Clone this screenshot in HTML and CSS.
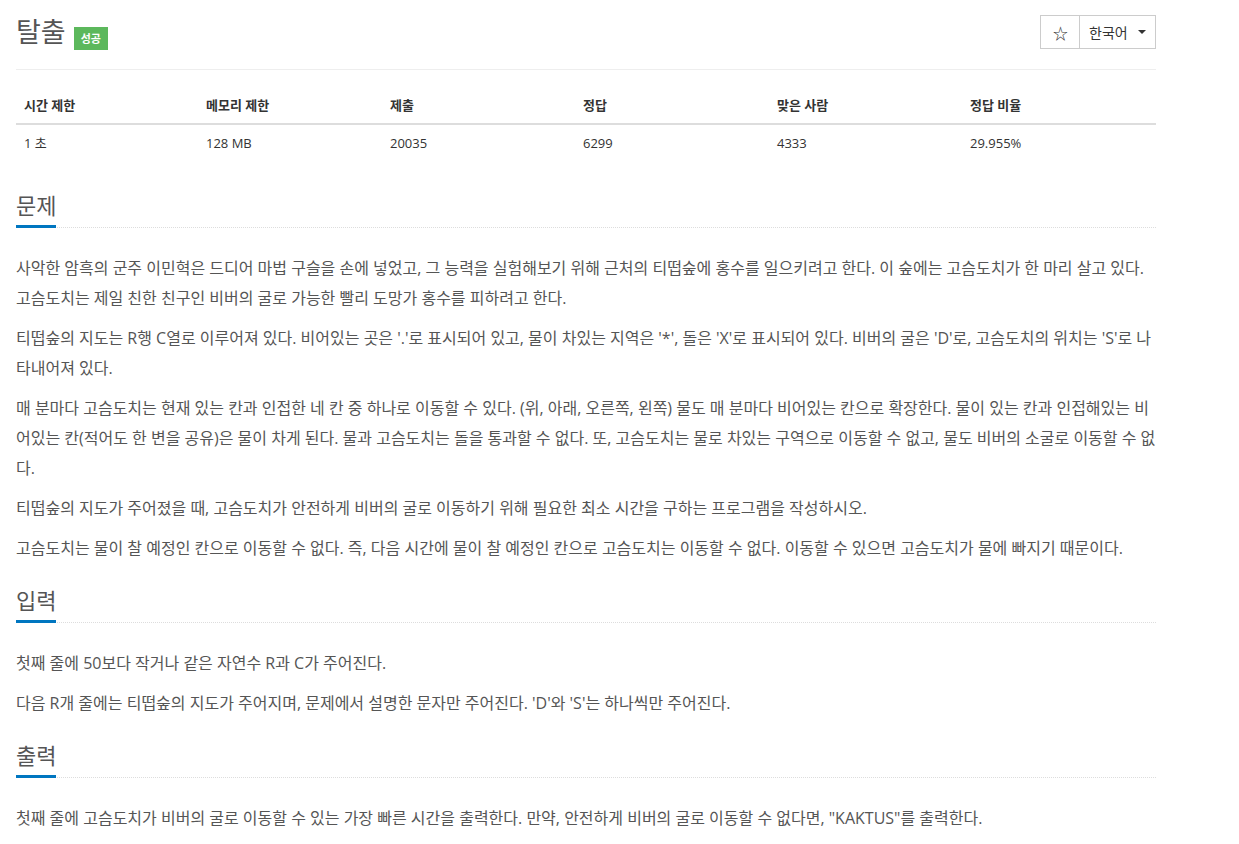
FILE: index.html
```html
<!DOCTYPE html>
<html lang="ko">
<head>
<meta charset="UTF-8">
<title>탈출</title>
<link rel="stylesheet" href="styles.css">
</head>
<body>
<div class="container">
  <div class="page-header">
    <h1 class="title">탈출 <span class="label-success">성공</span></h1>
    <div class="btn-group">
      <button class="btn btn-star">&#9734;</button>
      <button class="btn btn-lang">한국어 <span class="caret"></span></button>
    </div>
  </div>

  <table class="problem-info">
    <thead>
      <tr>
        <th class="col-time">시간 제한</th>
        <th class="col-memory">메모리 제한</th>
        <th class="col-submit">제출</th>
        <th class="col-accepted">정답</th>
        <th class="col-users">맞은 사람</th>
        <th>정답 비율</th>
      </tr>
    </thead>
    <tbody>
      <tr>
        <td>1 초</td>
        <td>128 MB</td>
        <td>20035</td>
        <td>6299</td>
        <td>4333</td>
        <td>29.955%</td>
      </tr>
    </tbody>
  </table>

  <section class="problem-section first">
    <div class="headline"><h2>문제</h2></div>
    <div class="problem-text">
      <p>사악한 암흑의 군주 이민혁은 드디어 마법 구슬을 손에 넣었고, 그 능력을 실험해보기 위해 근처의 티떱숲에 홍수를 일으키려고 한다. 이 숲에는 고슴도치가 한 마리 살고 있다. 고슴도치는 제일 친한 친구인 비버의 굴로 가능한 빨리 도망가 홍수를 피하려고 한다.</p>
      <p>티떱숲의 지도는 R행 C열로 이루어져 있다. 비어있는 곳은 '.'로 표시되어 있고, 물이 차있는 지역은 '*', 돌은 'X'로 표시되어 있다. 비버의 굴은 'D'로, 고슴도치의 위치는 'S'로 나타내어져 있다.</p>
      <p>매 분마다 고슴도치는 현재 있는 칸과 인접한 네 칸 중 하나로 이동할 수 있다. (위, 아래, 오른쪽, 왼쪽) 물도 매 분마다 비어있는 칸으로 확장한다. 물이 있는 칸과 인접해있는 비어있는 칸(적어도 한 변을 공유)은 물이 차게 된다. 물과 고슴도치는 돌을 통과할 수 없다. 또, 고슴도치는 물로 차있는 구역으로 이동할 수 없고, 물도 비버의 소굴로 이동할 수 없다.</p>
      <p>티떱숲의 지도가 주어졌을 때, 고슴도치가 안전하게 비버의 굴로 이동하기 위해 필요한 최소 시간을 구하는 프로그램을 작성하시오.</p>
      <p>고슴도치는 물이 찰 예정인 칸으로 이동할 수 없다. 즉, 다음 시간에 물이 찰 예정인 칸으로 고슴도치는 이동할 수 없다. 이동할 수 있으면 고슴도치가 물에 빠지기 때문이다.</p>
    </div>
  </section>

  <section class="problem-section">
    <div class="headline"><h2>입력</h2></div>
    <div class="problem-text">
      <p>첫째 줄에 50보다 작거나 같은 자연수 R과 C가 주어진다.</p>
      <p>다음 R개 줄에는 티떱숲의 지도가 주어지며, 문제에서 설명한 문자만 주어진다. 'D'와 'S'는 하나씩만 주어진다.</p>
    </div>
  </section>

  <section class="problem-section">
    <div class="headline"><h2>출력</h2></div>
    <div class="problem-text">
      <p>첫째 줄에 고슴도치가 비버의 굴로 이동할 수 있는 가장 빠른 시간을 출력한다. 만약, 안전하게 비버의 굴로 이동할 수 없다면, "KAKTUS"를 출력한다.</p>
    </div>
  </section>
</div>
</body>
</html>
```

FILE: styles.css
```css
/* General styles */
body {
  font-family: 'Open Sans', 'Noto Sans CJK KR', sans-serif;
  margin: 0;
  padding: 0;
  background-color: #fff;
  color: #555;
}

.container {
  width: 1140px;
  padding-left: 16px;
}

/* Header */
.page-header {
  display: flex;
  justify-content: space-between;
  align-items: flex-start;
  padding-top: 15px;
  padding-bottom: 19px;
  border-bottom: 1px solid #eee;
}

.title {
  margin: 0;
  font-size: 27px;
  font-weight: normal;
  line-height: 34px;
  color: #555;
}

.label-success {
  display: inline-block;
  background-color: #5cb85c;
  color: #fff;
  font-size: 11px;
  font-weight: bold;
  padding: 0 7px;
  line-height: 23px;
  vertical-align: -1px;
  margin-left: 1px;
}

.btn-group {
  display: flex;
}

.btn {
  font-family: inherit;
  background-color: #fff;
  color: #333;
  border: 1px solid #ccc;
  font-size: 14px;
  height: 34px;
  padding: 0 12px;
  white-space: nowrap;
  cursor: pointer;
}

.btn-star {
  width: 40px;
  font-size: 15px;
}

.btn-lang {
  width: 76px;
  padding: 0 0 0 9px;
  border-left: none;
  display: flex;
  align-items: center;
  gap: 10px;
}

.caret {
  display: inline-block;
  width: 0;
  height: 0;
  border-top: 4px solid #333;
  border-left: 4px solid transparent;
  border-right: 4px solid transparent;
}

/* Table styles */
.problem-info {
  width: 100%;
  border-collapse: collapse;
  table-layout: fixed;
  margin-top: 18px;
  font-size: 13px;
  color: #333;
}

.problem-info th,
.problem-info td {
  padding: 8px;
  text-align: left;
  line-height: 20px;
}

.problem-info th {
  font-weight: bold;
  line-height: 19px;
  border-bottom: 2px solid #ddd;
}

.col-time { width: 166px; }
.col-memory { width: 168px; }
.col-submit { width: 177px; }
.col-accepted { width: 178px; }
.col-users { width: 177px; }

/* Sections */
.problem-section {
  margin-top: 17px;
}

.problem-section.first {
  margin-top: 24px;
}

.headline {
  border-bottom: 1px dotted #ddd;
  margin-bottom: 25px;
}

.headline h2 {
  display: inline-block;
  margin: 0 0 -1px;
  font-size: 22px;
  font-weight: normal;
  line-height: 40px;
  color: #555;
  border-bottom: 3px solid #0076c0;
}

.problem-text {
  font-size: 16px;
  line-height: 30px;
}

.problem-text p {
  margin: 0 0 10px;
}
```
